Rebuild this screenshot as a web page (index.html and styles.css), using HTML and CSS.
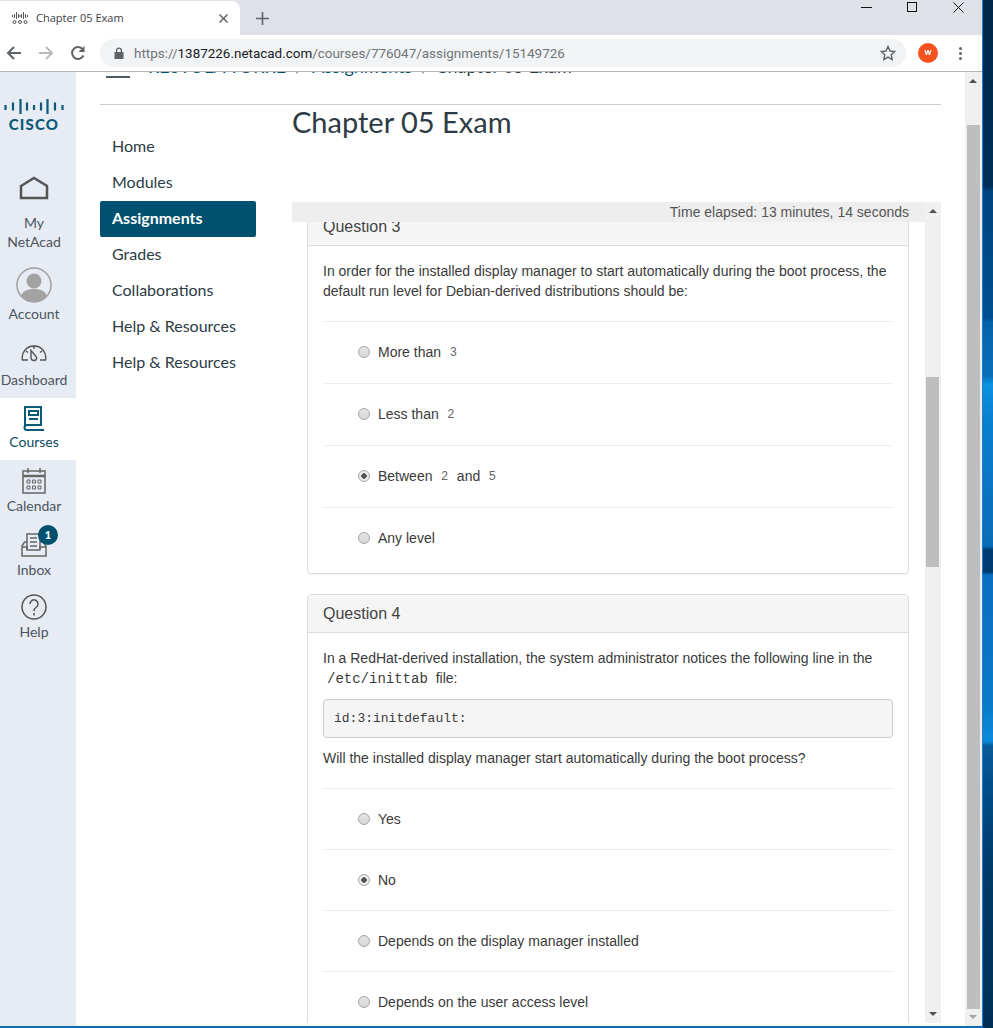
FILE: index.html
```html
<!DOCTYPE html>
<html lang="en">

<head>
    <meta charset="UTF-8">
    <meta name="viewport" content="width=device-width, initial-scale=1.0">
    <title>Chapter 05 Exam</title>
    <link rel="stylesheet" href="styles.css">
</head>

<body>
    <div class="window">
        <div class="tabStrip">
            <div class="tab">
                <svg class="tabLogo" width="16" height="12" viewBox="0 0 16 12" fill="none" stroke="#555" stroke-width="1">
                    <path d="M.5 3v2M2.500 2v4M4.500 0v7M6.500 2v4M8 3v2M9.500 2v4M11.500 0v7M13.500 2v4M15.500 3v2"/>
                    <circle cx="2.500" cy="10" r="1.500"/><circle cx="8" cy="10" r="1.500"/><circle cx="13.500" cy="10" r="1.500"/>
                </svg>
                <span class="tabTitle">Chapter 05 Exam</span>
                <svg class="tabClose" width="9" height="9" viewBox="0 0 9 9" stroke="#5f6368" stroke-width="1.500"><path d="M.5 .5l8 8M8.500 .5l-8 8"/></svg>
            </div>
            <svg class="newTab" width="13" height="13" viewBox="0 0 13 13" stroke="#5f6368" stroke-width="1.600"><path d="M6.500 0v13M0 6.500h13"/></svg>
            <div class="windowButtons">
                <svg width="11" height="11" viewBox="0 0 11 11" stroke="#111" stroke-width="1"><path d="M0 5.500h11"/></svg>
                <svg width="11" height="11" viewBox="0 0 11 11" fill="none" stroke="#111" stroke-width="1"><rect x=".5" y=".5" width="9" height="9"/></svg>
                <svg width="11" height="11" viewBox="0 0 11 11" stroke="#111" stroke-width="1"><path d="M.5 .5l10 10M10.500 .5l-10 10"/></svg>
            </div>
        </div>

        <div class="toolbar">
            <svg width="16" height="16" viewBox="0 0 16 16" fill="none" stroke="#5f6368" stroke-width="2"><path d="M15 8H2M8 2L2 8l6 6"/></svg>
            <svg width="16" height="16" viewBox="0 0 16 16" fill="none" stroke="#b9bbbe" stroke-width="2"><path d="M1 8h13M8 2l6 6-6 6"/></svg>
            <svg width="16" height="16" viewBox="0 0 16 16" fill="none" stroke="#5f6368" stroke-width="2"><path d="M13.500 10.500A6 6 0 1 1 13 4.500"/><path d="M14.500 1v6h-6z" fill="#5f6368" stroke="none"/></svg>
            <div class="omnibox">
                <svg width="10" height="12" viewBox="0 0 10 12"><path d="M2 5V3.500a3 3 0 0 1 6 0V5h1.500v7H.5V5zM3.300 5h3.400V3.500a1.700 1.700 0 0 0-3.400 0z" fill="#5f6368" fill-rule="evenodd"/></svg>
                <span class="url">https://<b>1387226.netacad.com</b>/courses/776047/assignments/15149726</span>
                <svg class="star" width="16" height="16" viewBox="0 0 16 16" fill="none" stroke="#5f6368" stroke-width="1.400"><path d="M8 1.500l2 4.500 4.800.5-3.600 3.200 1 4.800L8 12.100 3.800 14.500l1-4.800L1.200 6.500 6 6z"/></svg>
            </div>
            <div class="avatar">W</div>
            <div class="dots"><i></i><i></i><i></i></div>
        </div>

        <div class="page">
            <nav class="rail">
                <div class="railLogo">
                    <svg width="60" height="16" viewBox="0 0 60 16" stroke="#0b5a78" stroke-width="2.200">
                        <path d="M1.500 6v5M9 3.500v8M16.500 0v15M23 3.500v8M30 6v5M37 3.500v8M43.500 0v15M51 3.500v8M58.500 6v5"/>
                    </svg>
                    <span class="ciscoWord">CISCO</span>
                </div>
                <a class="railItem railHome">
                    <svg width="30" height="24" viewBox="0 0 30 24" fill="none" stroke="#555" stroke-width="2.500"><path d="M2 10L15 2l13 8v12H2z"/></svg>
                    <span>My<br>NetAcad</span>
                </a>
                <a class="railItem railAccount">
                    <svg width="36" height="36" viewBox="0 0 36 36">
                        <circle cx="18" cy="18" r="17" fill="#e7ebf3" stroke="#a2a2a2" stroke-width="1.500"/>
                        <circle cx="18" cy="14" r="7.500" fill="#a2a2a2"/>
                        <path d="M5 29c2-6 8-7 13-7s11 1 13 7c-3 4-8 6-13 6s-10-2-13-6z" fill="#a2a2a2"/>
                    </svg>
                    <span>Account</span>
                </a>
                <a class="railItem railDash">
                    <svg width="26" height="18" viewBox="0 0 26 18" fill="none" stroke="#555" stroke-width="1.400"><path d="M7 16H1.500A11.500 11.500 0 0 1 13 2a11.500 11.500 0 0 1 11.500 14H19M5 7l2 1.500M13 2v3M21 7l-2 1.500"/><path d="M10 6.500l5.500 6.500c.5 2-.5 3.500-2.500 3.500s-3-1.500-3-3z"/></svg>
                    <span>Dashboard</span>
                </a>
                <a class="railItem railCourses">
                    <svg width="22" height="26" viewBox="0 0 22 26" fill="none" stroke="#0b5a78" stroke-width="2"><path d="M2 21V2h16v18H4a2.500 2.500 0 0 0 0 5h17"/><rect x="6" y="6" width="9" height="4"/><path d="M6 14h9"/></svg>
                    <span>Courses</span>
                </a>
                <a class="railItem railCalendar">
                    <svg width="24" height="26" viewBox="0 0 24 26" fill="none" stroke="#666" stroke-width="1.500">
                        <rect x="1" y="3" width="22" height="22"/><path d="M1 8h22" stroke-width="2.500"/><path d="M6 0v5M18 0v5"/>
                        <path d="M5 12h3v3H5zM10.500 12h3v3h-3zM16 12h3v3h-3zM5 18h3v3H5zM10.500 18h3v3h-3zM16 18h3v3h-3z" stroke-width="1"/>
                    </svg>
                    <span>Calendar</span>
                </a>
                <a class="railItem railInbox">
                    <svg width="26" height="26" viewBox="0 0 26 26" fill="none" stroke="#666" stroke-width="1.500"><path d="M6 17V2h13v15M9 6h7M9 10h7M9 14h7"/><path d="M6 10H3.500L1 14v10h24V14l-3-4h-3M1 15h5v3h13v-3h6"/></svg>
                    <span>Inbox</span>
                    <b class="badge">1</b>
                </a>
                <a class="railItem railHelp">
                    <svg width="26" height="26" viewBox="0 0 26 26" fill="none" stroke="#555" stroke-width="1.500"><circle cx="13" cy="13" r="12"/><path d="M9 10a4 4 0 1 1 6.500 3c-1.500 1-2.500 2-2.500 4"/><path d="M13 19v2.500"/></svg>
                    <span>Help</span>
                </a>
            </nav>

            <main class="main">
                <div class="crumbBar">
                    <div class="crumbs">
                        <span class="burger"></span>
                        <span class="crumbLink">RESTOLA TORRE</span>
                        <span class="crumbSep">/</span>
                        <span class="crumbLink">Assignments</span>
                        <span class="crumbSep">/</span>
                        <span class="crumbLast">Chapter 05 Exam</span>
                    </div>
                </div>
                <div class="columns">
                    <ul class="courseNav">
                        <li>Home</li>
                        <li>Modules</li>
                        <li class="active">Assignments</li>
                        <li>Grades</li>
                        <li>Collaborations</li>
                        <li>Help &amp; Resources</li>
                        <li>Help &amp; Resources</li>
                    </ul>
                    <div class="exam">
                        <h1>Chapter 05 Exam</h1>
                        <div class="examFrame">
                            <div class="examMain">
                                <div class="timer">Time elapsed: 13 minutes, 14 seconds</div>
                                <div class="questions">
                                    <section class="card cardThree">
                                        <h2 class="cardHead">Question 3</h2>
                                        <div class="cardBody">
                                            <p>In order for the installed display manager to start automatically during the boot process, the default run level for Debian-derived distributions should be:</p>
                                            <div class="answer three"><i class="radio"></i>More than <code>3</code></div>
                                            <div class="answer three"><i class="radio"></i>Less than <code>2</code></div>
                                            <div class="answer three"><i class="radio checked"></i>Between <code>2</code> and <code>5</code></div>
                                            <div class="answer three"><i class="radio"></i>Any level</div>
                                        </div>
                                    </section>
                                    <section class="card">
                                        <h2 class="cardHead">Question 4</h2>
                                        <div class="cardBody">
                                            <p>In a RedHat-derived installation, the system administrator notices the following line in the <code class="file">/etc/inittab</code> file:</p>
                                            <pre>id:3:initdefault:</pre>
                                            <p>Will the installed display manager start automatically during the boot process?</p>
                                            <div class="answer"><i class="radio"></i>Yes</div>
                                            <div class="answer"><i class="radio checked"></i>No</div>
                                            <div class="answer"><i class="radio"></i>Depends on the display manager installed</div>
                                            <div class="answer"><i class="radio"></i>Depends on the user access level</div>
                                        </div>
                                    </section>
                                </div>
                            </div>
                            <div class="scrollbar innerBar">
                                <i class="arrowUp"></i>
                                <i class="thumb"></i>
                                <i class="arrowDown"></i>
                            </div>
                        </div>
                    </div>
                </div>
            </main>

            <div class="scrollbar pageBar">
                <i class="arrowUp"></i>
                <i class="thumb"></i>
                <i class="arrowDown"></i>
            </div>
        </div>
    </div>
</body>

</html>
```

FILE: styles.css
```css
html, body {
    height: 100%;
}

/* the desktop wallpaper shows in the strip right of the window */
body {
    margin: 0;
    height: 1028px;
    overflow: hidden;
    font-family: 'Liberation Sans', Arial, sans-serif;
    background: linear-gradient(to bottom, #00274a 0, #002f5a 187px, #00457f 191px, #004f90 318px, #0562a8 322px, #0a6fbb 376px, #0b94e0 384px, #0a7fd0 420px, #0a6cb8 546px, #003a70 550px, #003a70 572px, #0a6fc0 575px, #0a78c8 700px, #0b8ada 741px, #0a5a9a 746px, #004a84 800px, #003a68 870px, #002f56 1028px);
}

.window {
    width: 982px;
    height: 1026px;
    display: flex;
    flex-direction: column;
    background: #fff;
    border-right: 1px solid #1a7fd0;
    box-shadow: 0 2px 0 #0f6cb8;
}

/* browser chrome */
.tabStrip {
    height: 35px;
    flex: none;
    display: flex;
    align-items: flex-end;
    background: #dee1e6;
    position: relative;
}

.tab {
    width: 240px;
    height: 34px;
    background: #fff;
    border-radius: 0 8px 0 0;
    display: flex;
    align-items: center;
    box-sizing: border-box;
    padding: 0 12px 0 12px;
}

.tabTitle {
    margin: 0 0 2px 8px;
    font: 11px 'Open Sans', sans-serif;
    color: #3c4043;
    flex: 1;
}

.newTab {
    margin: 0 0 10px 16px;
}

.windowButtons {
    position: absolute;
    top: 2px;
    right: 18px;
    display: flex;
    gap: 35px;
}

.toolbar {
    height: 37px;
    flex: none;
    display: flex;
    align-items: center;
    gap: 16px;
    box-sizing: border-box;
    padding: 0 15px 0 6px;
    background: #fff;
    border-bottom: 1px solid #b4b4b4;
}

.omnibox {
    width: 806px;
    height: 28px;
    margin-left: -2px;
    display: flex;
    align-items: center;
    box-sizing: border-box;
    padding: 0 10px 0 14px;
    background: #f1f3f4;
    border-radius: 14px;
}

.url {
    margin-left: 10px;
    flex: 1;
    font: 13.440px Roboto, sans-serif;
    color: #70757a;
}

.url b {
    font-weight: 400;
    color: #202124;
}

.avatar {
    width: 20px;
    height: 20px;
    margin-left: -4px;
    border-radius: 50%;
    background: #f4511e;
    color: #fff;
    font: bold 8px/20px Roboto, sans-serif;
    text-align: center;
}

.dots {
    display: flex;
    flex-direction: column;
    gap: 2px;
    margin-left: 5px;
}

.dots i {
    width: 3px;
    height: 3px;
    border-radius: 50%;
    background: #5f6368;
}

/* page */
.page {
    flex: 1;
    min-height: 0;
    display: flex;
}

.rail {
    width: 76px;
    flex: none;
    background: #e7ebf3;
    padding-top: 27px;
    box-sizing: border-box;
}

.railLogo {
    display: flex;
    flex-direction: column;
    align-items: center;
    height: 46px;
    padding-right: 8px;
    margin-bottom: 27px;
}

.ciscoWord {
    margin-top: 1px;
    font: 900 15px/16px Lato, sans-serif;
    letter-spacing: 1.200px;
    color: #0b5a78;
}

.railItem {
    display: flex;
    flex-direction: column;
    align-items: center;
    position: relative;
    box-sizing: border-box;
    padding-right: 8px;
    font: 14px/19px Lato, sans-serif;
    color: #4a5560;
    text-align: center;
}

.railItem span {
    display: block;
}

.railHome {
    height: 96px;
    gap: 13px;
    padding-top: 4px;
}

.railAccount {
    height: 60px;
    gap: 1px;
    margin-top: -1px;
}

.railDash {
    height: 71px;
    padding-top: 17px;
    gap: 8px;
}

.railCourses {
    height: 62px;
    background: #fff;
    padding-top: 7px;
    gap: 1px;
    color: #0b4a64;
}

.railCalendar {
    height: 64px;
    padding-top: 8px;
    gap: 2px;
}

.railInbox {
    height: 64px;
    padding-top: 8px;
    gap: 2px;
}

.railHelp {
    padding-top: 6px;
    gap: 2px;
}

.badge {
    position: absolute;
    top: 1px;
    left: 38px;
    width: 20px;
    height: 20px;
    border-radius: 50%;
    background: #00506f;
    color: #fff;
    font: 900 11px/20px Lato, sans-serif;
}

.main {
    flex: 1;
    min-width: 0;
    overflow: hidden;
}

.crumbBar {
    height: 32px;
    margin: 0 24px;
    border-bottom: 1px solid #c7cdd1;
    overflow: hidden;
}

.crumbs {
    display: flex;
    align-items: center;
    height: 26px;
    margin-top: -19px;
    font: 18px/26px Lato, sans-serif;
}

.burger {
    width: 24px;
    height: 2px;
    align-self: flex-start;
    margin: 23px 18px 0 6px;
    background: #4a5a66;
}

.crumbLink {
    color: #00506f;
}

.crumbSep {
    margin: 0 9px;
    color: #73818c;
}

.crumbLast {
    margin-left: -3px;
    color: #2d3b45;
}

.columns {
    display: flex;
    margin: 0 24px;
    gap: 36px;
}

.courseNav {
    list-style: none;
    margin: 24px 0 0;
    padding: 0;
    width: 156px;
    flex: none;
    font: 16px/34px Lato, sans-serif;
    color: #2d3b45;
}

.courseNav li {
    padding-left: 12px;
    height: 36px;
}

.courseNav .active {
    background: #00506f;
    color: #fff;
    font-weight: 700;
    border-radius: 2px;
}

.exam {
    flex: 1;
    min-width: 0;
}

h1 {
    margin: 0;
    height: 97px;
    font: 400 29px/34px Lato, sans-serif;
    color: #2d3b45;
}

.examFrame {
    height: 821px;
    display: flex;
    overflow: hidden;
}

.examMain {
    flex: 1;
    min-width: 0;
    display: flex;
    flex-direction: column;
}

.timer {
    height: 20px;
    flex: none;
    position: relative;
    z-index: 1;
    background: #eee;
    padding-right: 16px;
    text-align: right;
    font-size: 14px;
    line-height: 20px;
    color: #555;
}

.questions {
    flex: 1;
    min-height: 0;
    overflow: hidden;
    padding: 0 16px 0 15px;
}

.card {
    border: 1px solid #ddd;
    border-radius: 4px;
    margin-bottom: 20px;
    box-shadow: 0 1px 1px rgba(0, 0, 0, 0.05);
}

.cardThree {
    margin-top: -15px;
}

.cardHead {
    margin: 0;
    height: 37px;
    background: #f5f5f5;
    border-bottom: 1px solid #ddd;
    padding: 0 15px;
    font: 400 16px/37px 'Liberation Sans', Arial, sans-serif;
    color: #444;
}

.cardBody {
    padding: 15px 15px 4px;
    font-size: 14px;
    line-height: 20px;
    color: #3a3a3a;
}

.cardBody p {
    margin: 0 0 10px;
}

.cardBody p + .answer,
.cardBody pre + p + .answer {
    margin-top: 20px;
}

.answer {
    height: 61px;
    display: flex;
    align-items: center;
    white-space: pre-wrap;
    box-sizing: border-box;
    padding-left: 35px;
    border-top: 1px solid #eee;
}

.answer.three {
    height: 62px;
    padding-bottom: 2px;
}

.answer code {
    margin: 2px 0.700px 0;
    font-size: 12px;
    color: #666;
}

code {
    font: 12px 'Liberation Mono', monospace;
    color: #3a3a3a;
    padding: 0 4px;
}

code.file {
    font-size: 14px;
}

pre {
    margin: 11px 0 10px;
    padding: 9px;
    padding-left: 10px;
    height: 19px;
    font: 13px/20px 'Liberation Mono', monospace;
    color: #3a3a3a;
    background: #f5f5f5;
    border: 1px solid #ccc;
    border-radius: 4px;
}

.radio {
    width: 12px;
    height: 12px;
    margin-right: 8px;
    flex: none;
    box-sizing: border-box;
    border: 1px solid #a6a6a6;
    border-radius: 50%;
    background: linear-gradient(#e4e4e4, #d8d8d8);
}

.radio.checked {
    background: radial-gradient(circle, #555 0, #555 2.500px, #ededed 3px);
}

/* scrollbars */
.scrollbar {
    width: 16px;
    flex: none;
    background: #f0f0f0;
    position: relative;
}

.pageBar {
    width: 17px;
}

.thumb {
    position: absolute;
    left: 1px;
    right: 2px;
    background: #bebebe;
}

.innerBar .thumb {
    top: 175px;
    height: 190px;
}

.pageBar .thumb {
    left: 2px;
    top: 53px;
    height: 884px;
}

.arrowUp, .arrowDown {
    position: absolute;
    left: 4px;
    width: 0;
    height: 0;
    border-left: 4px solid transparent;
    border-right: 4px solid transparent;
}

.arrowUp {
    top: 7px;
    border-bottom: 4px solid #505050;
}

.arrowDown {
    bottom: 7px;
    border-top: 4px solid #505050;
}

.pageBar .arrowDown {
    border-top-color: #a3a3a3;
}
```
